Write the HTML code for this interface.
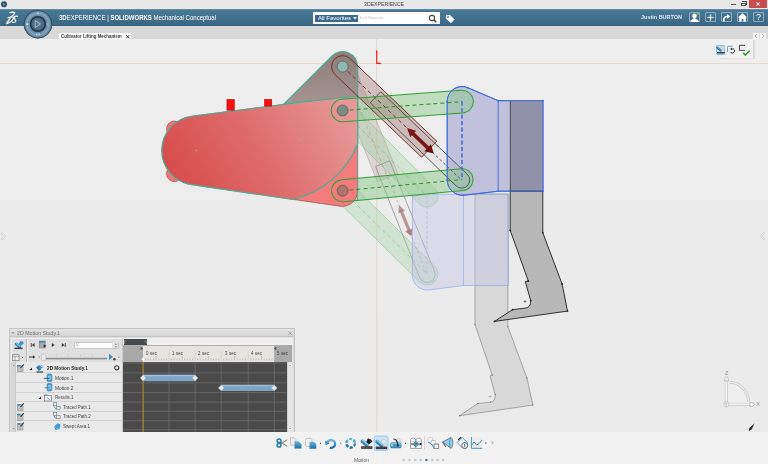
<!DOCTYPE html>
<html><head><meta charset="utf-8">
<style>
*{margin:0;padding:0;box-sizing:border-box}
html,body{width:768px;height:464px;overflow:hidden;background:#ebebeb;font-family:"Liberation Sans",sans-serif}
.a{position:absolute}
.t{position:absolute;white-space:nowrap;line-height:1;transform-origin:0 0;transform:scaleX(0.9999);filter:opacity(1)}
#title{left:0;top:0;width:768px;height:9px;background:#e8e8e8}
#blue{left:0;top:9px;width:768px;height:17px;background:linear-gradient(#7a98ad 0,#477898 1.2px,#43738f 45%,#3a6482 100%)}
#tabbar{left:0;top:26px;width:768px;height:13px;background:#d9d9d9}
#canvas{left:0;top:39px;width:768px;height:393px;background:linear-gradient(#efefef,#ebebeb 60%,#eaeaea)}
#bottom{left:0;top:432px;width:768px;height:32px;background:rgba(243,243,243,0.88)}
svg{position:absolute;left:0;top:0;overflow:visible}
.ib{position:absolute;width:11px;height:10px;border:1px solid rgba(200,220,235,0.55);border-radius:1px}
</style></head><body>

<div id="title" class="a"></div>
<div class="t" style="left:363.5px;top:2px;font-size:5.2px;color:#444">3DEXPERIENCE</div>
<!-- small app icon -->
<svg width="10" height="10" style="left:0;top:0">
<circle cx="4" cy="4.3" r="3" fill="#2a4a66"/><path d="M1.3,3 A3,3 0 0 1 4.5,1.3" fill="none" stroke="#6f9cc4" stroke-width="0.8"/><path d="M4.6,7.3 A3,3 0 0 0 6.9,5" fill="none" stroke="#6f9cc4" stroke-width="0.7"/>
<path d="M3.3,2.9 L5.3,4.3 L3.3,5.7Z" fill="#aac4da"/>
</svg>
<!-- window controls -->
<div class="a" style="left:731px;top:4px;width:4.5px;height:1px;background:#555"></div>
<div class="a" style="left:741px;top:2.5px;width:4.5px;height:3.8px;border:0.8px solid #555;border-top-width:1.2px"></div>
<div class="a" style="left:742.3px;top:1.3px;width:4.4px;height:3.6px;border-top:0.8px solid #555;border-right:0.8px solid #555"></div>
<div class="a" style="left:749px;top:0;width:18px;height:8px;background:#c94c4c"></div>
<svg width="18" height="8" style="left:749px;top:0"><path d="M7.3,2.3 L10.7,5.7 M10.7,2.3 L7.3,5.7" stroke="#fff" stroke-width="1"/></svg>

<div id="blue" class="a"></div>
<!-- 3DS logo -->
<svg width="20" height="28" style="left:0;top:0">
<path d="M10,12.7 C11.5,12.2 13.5,12 14.7,12.7 C14.3,14.5 12.6,16 10.7,17" fill="none" stroke="#fff" stroke-width="1.2" stroke-linecap="round"/>
<path d="M7.8,17.7 C9.6,17.1 12,16.9 13.6,17.3 C13.8,19.6 11,22.4 6.5,23.6" fill="none" stroke="#fff" stroke-width="1.1" stroke-linecap="round"/>
<path d="M10,18.2 C8.9,20 7.6,22.2 6.5,23.6" fill="none" stroke="#fff" stroke-width="1.3" stroke-linecap="round"/>
<path d="M17.6,16.4 C16,15.9 13.8,16.4 14,17.9 C14.2,19.2 16,19.6 15.8,21 C15.6,22.2 13.8,22.6 12.4,22.4" fill="none" stroke="#fff" stroke-width="1.2" stroke-linecap="round"/>
</svg>
<div class="t" style="left:58.5px;top:14.2px;font-size:8px;color:#fff;transform:scaleX(0.752)"><b>3D</b>EXPERIENCE <span style="font-weight:400">|</span> <b>SOLIDWORKS</b> Mechanical Conceptual</div>
<!-- search -->
<div class="a" style="left:313px;top:12px;width:127px;height:12px;background:#fff;border-radius:1px"></div>
<div class="a" style="left:314.6px;top:14.6px;width:43.3px;height:7px;background:#3d6a8c"></div>
<div class="t" style="left:317.5px;top:15px;font-size:6px;color:#fff">All Favorites</div>
<svg width="6" height="4" style="left:352.5px;top:17px"><path d="M0,0 L4,0 L2,2.5Z" fill="#fff"/></svg>
<div class="t" style="left:360.4px;top:16.3px;font-size:4.1px;color:#b8b8b8">In 4 Sources</div>
<svg width="10" height="10" style="left:428px;top:14px">
<circle cx="4" cy="4" r="2.6" fill="none" stroke="#444" stroke-width="1.1"/>
<path d="M5.9,5.9 L8.3,8.3" stroke="#444" stroke-width="1.5"/>
</svg>
<svg width="12" height="10" style="left:445px;top:14px">
<path d="M1,1 L5,1 L9.5,5.5 L5.8,9.2 L1,4.5Z" fill="#fff"/>
<circle cx="3" cy="3" r="0.9" fill="#3f7095"/>
</svg>
<!-- user -->
<div class="t" style="left:641.2px;top:15px;font-size:5.5px;font-weight:700;color:#dfe8ef;transform:scaleX(0.995)">Justin BURTON</div>
<div class="ib" style="left:689px;top:12px;width:11px;height:10px"></div>
<svg width="12" height="12" style="left:689px;top:12px">
<circle cx="5.5" cy="3.9" r="2.3" fill="#fff"/>
<path d="M4.6,5.8 L6.4,5.8 L6.6,7 C8.5,7.4 9.6,8.2 9.6,10 L1.4,10 C1.4,8.2 2.5,7.4 4.4,7Z" fill="#fff"/>
<circle cx="9" cy="1.5" r="1.2" fill="#5fcf3f"/>
</svg>
<div class="ib" style="left:705px;top:12px"></div>
<svg width="12" height="12" style="left:705px;top:12px"><path d="M5.5,2.5 L5.5,8.5 M2.5,5.5 L8.5,5.5" stroke="#fff" stroke-width="1.2"/></svg>
<div class="ib" style="left:721px;top:12px"></div>
<svg width="12" height="12" style="left:721px;top:12px"><path d="M2.8,9.3 C2.3,6 4,4.3 7,4.3" fill="none" stroke="#fff" stroke-width="1.6"/><path d="M6.2,2 L9.3,4.4 L6.2,6.8Z" fill="#fff"/></svg>
<div class="ib" style="left:737px;top:12px"></div>
<svg width="12" height="12" style="left:737px;top:12px"><path d="M5.5,1.3 L10,5.5 L8.8,5.5 L8.8,9.6 L2.2,9.6 L2.2,5.5 L1,5.5Z" fill="#fff"/><rect x="4.6" y="6.8" width="1.8" height="2.8" fill="#4a7a9c"/></svg>
<div class="ib" style="left:753px;top:12px"></div>
<div class="t" style="left:755.8px;top:13px;font-size:9px;color:#fff">?</div>

<div id="tabbar" class="a"></div>
<!-- tab -->
<div class="a" style="left:59px;top:32.7px;width:72px;height:6.5px;background:#fff"></div>
<div class="t" style="left:61px;top:34px;font-size:5px;font-weight:700;color:#333;transform:scaleX(0.885)">Cultivator Lifting Mechanism</div>
<svg width="6" height="6" style="left:125px;top:33.5px"><path d="M1,1 L4.4,4.4 M4.4,1 L1,4.4" stroke="#222" stroke-width="0.9"/></svg>
<!-- tab scroll arrows -->
<div class="a" style="left:753px;top:33px;width:6px;height:6px;background:#f4f4f4"></div>
<div class="a" style="left:760px;top:33px;width:6px;height:6px;background:#f4f4f4"></div>
<svg width="16" height="8" style="left:753px;top:33px"><path d="M3.8,1.3 L2,3 L3.8,4.7" fill="none" stroke="#999" stroke-width="0.7"/><path d="M9.3,1.3 L11.2,3 L9.3,4.7" fill="none" stroke="#999" stroke-width="0.7"/></svg>

<div id="canvas" class="a"></div>
<!-- compass -->
<svg width="40" height="40" style="left:18px;top:4px">
<defs>
<radialGradient id="cg" cx="0.5" cy="0.5" r="0.5"><stop offset="0.5" stop-color="#4a6f88"/><stop offset="0.78" stop-color="#86a8bf"/><stop offset="0.93" stop-color="#5d829c"/><stop offset="1" stop-color="#3a5c74"/></radialGradient>
<radialGradient id="cg2" cx="0.5" cy="0.45" r="0.55"><stop offset="0" stop-color="#5d7f96"/><stop offset="1" stop-color="#3f6077"/></radialGradient>
</defs>
<circle cx="19.95" cy="20.15" r="14" fill="url(#cg)" stroke="#2c4d63" stroke-width="0.9"/>
<circle cx="19.9" cy="20" r="7.3" fill="url(#cg2)" stroke="#1c3344" stroke-width="1.4"/>
<path d="M17.2,16.5 L22.4,20 L17.2,23.6Z" fill="none" stroke="#b9ccd9" stroke-width="0.8"/>
<rect x="19.6" y="8" width="0.8" height="2.4" fill="#e4ecf1"/>
<rect x="8.2" y="19.4" width="2.2" height="1.4" fill="#e4ecf1"/>
<path d="M29.2,19.2 L30,21.6" stroke="#e4ecf1" stroke-width="0.6"/>
<rect x="18.3" y="29.6" width="1" height="1.4" fill="#e4ecf1"/><rect x="20.6" y="29.6" width="1" height="1.4" fill="#e4ecf1"/>
</svg>

<svg width="768" height="464" viewBox="0 0 768 464" style="left:0;top:0">
<defs>
<linearGradient id="redg" x1="0" y1="0.6" x2="1" y2="0.3">
<stop offset="0" stop-color="#d84d4d"/><stop offset="0.45" stop-color="#de6a6a"/><stop offset="1" stop-color="#e79898"/></linearGradient>
<linearGradient id="trig" x1="0" y1="0" x2="0" y2="1">
<stop offset="0" stop-color="#8b7f7a"/><stop offset="1" stop-color="#a5938f"/></linearGradient>
<path id="lnkG1" d="M0,-11.3 L119.7,-11.3 A11.3,11.3 0 0 1 119.7,11.3 L0,11.3 A11.3,11.3 0 0 1 0,-11.3Z"/>
<path id="lnkG2" d="M0,-11 L119.9,-11 A11,11 0 0 1 119.9,11 L0,11 A11,11 0 0 1 0,-11Z"/>
<path id="lnkBr" d="M0,-11 L119.7,-11 L119.7,11 L0,11 A11,11 0 0 1 0,-11Z"/>
<path id="bodyB" d="M192,116.2 L350,96 L357.6,96 L357.6,192 A15.5,15.5 0 0 1 340,206.2 L191.6,184.6 A34.5,34.5 0 0 1 192,116.2Z"/>
<path id="bodyA" d="M192,116.2 L350,96 L357.6,96 L357.6,144 A92,92 0 0 1 293,199.5 L191.6,184.6 A34.5,34.5 0 0 1 192,116.2Z"/>
</defs>
<!-- axis lines -->
<line x1="0" y1="63.5" x2="768" y2="63.5" stroke="#e9d8d0" stroke-width="1"/>
<line x1="376.7" y1="39" x2="376.7" y2="464" stroke="#e5d7d2" stroke-width="1"/>
<path d="M376.7,51.5 L376.7,63.4 L380,63.4" fill="none" stroke="#ee2020" stroke-width="1.2"/><path d="M375.6,52.5 L376.7,49.8 L377.8,52.5Z M379.5,62.2 L381.5,63.4 L379.5,64.6Z" fill="#ee2020"/>
<!-- ghost tine -->
<path d="M475,194 L475,324.6 L492.2,375 L490.1,375.9 L495.2,394.6 Q495.5,401.5 490.7,402.1 L477.7,403.6 L459.6,415.7 L532.9,405.1 L526.9,378 L507.9,326.7 L507.9,194Z" fill="#d8d8d8" stroke="#8a8a8a" stroke-width="0.7"/>
<g fill="#777"><circle cx="475" cy="324.6" r="0.7"/><circle cx="507.9" cy="326.7" r="0.7"/><circle cx="492.2" cy="375" r="0.7"/><circle cx="526.9" cy="378" r="0.7"/><circle cx="495.2" cy="394.6" r="0.7"/><circle cx="490.7" cy="402.1" r="0.7"/><circle cx="477.7" cy="403.6" r="0.7"/><circle cx="459.6" cy="415.7" r="0.7"/><circle cx="532.9" cy="405.1" r="0.7"/></g>
<circle cx="490.5" cy="396" r="0.3" fill="none"/>
<path d="M488.5,396.5 L491.5,396.5 M490,395 L490,398" stroke="#999" stroke-width="0.5"/>
<!-- ghost brown link -->
<g transform="translate(342.6,66.6) rotate(67.9)">
<path d="M0,-11 L119.7,-11 L119.7,11 L0,11 A11,11 0 0 1 0,-11Z" fill="rgba(175,145,145,0.25)" stroke="rgba(150,100,100,0.4)" stroke-width="0.7"/>
<line x1="0" y1="0" x2="119" y2="0" stroke="rgba(140,80,80,0.45)" stroke-width="0.7" stroke-dasharray="4,3"/>
<path d="M105,-8.2 L224.3,-8.2 A8.1,8.1 0 0 1 224.3,8 L105,7.1 Z" fill="none" stroke="rgba(70,70,70,0.55)" stroke-width="0.7"/>
<line x1="119" y1="0" x2="224" y2="0" stroke="rgba(90,90,90,0.45)" stroke-width="0.7" stroke-dasharray="3,2"/>
<line x1="155" y1="0" x2="181" y2="0" stroke="rgba(175,130,130,0.8)" stroke-width="3.2"/>
<polygon points="149.5,0 157,-3.6 157,3.6" fill="rgba(175,130,130,0.8)"/>
<polygon points="183,0 176,-4 176,4" fill="rgba(165,120,120,0.8)"/>
</g>
<!-- ghost green links -->
<g transform="translate(342.6,110.5) rotate(45.4)">
<path d="M0,-11 L120.5,-11 A11,11 0 0 1 120.5,11 L0,11 A11,11 0 0 1 0,-11Z" fill="rgba(150,210,150,0.3)" stroke="rgba(90,175,90,0.45)" stroke-width="0.7"/>
<line x1="0" y1="0" x2="120" y2="0" stroke="rgba(60,150,60,0.45)" stroke-width="0.7" stroke-dasharray="4,3"/>
</g>
<g transform="translate(342.6,190.7) rotate(44.6)">
<path d="M0,-11 L118.5,-11 A11,11 0 0 1 118.5,11 L0,11 A11,11 0 0 1 0,-11Z" fill="rgba(150,210,150,0.3)" stroke="rgba(90,175,90,0.45)" stroke-width="0.7"/>
<line x1="0" y1="0" x2="118" y2="0" stroke="rgba(60,150,60,0.45)" stroke-width="0.7" stroke-dasharray="4,3"/>
</g>
<!-- ghost blue piece -->
<path d="M412.4,196 L412.4,275.7 A14.8,14.8 0 0 0 428.4,290 L463.4,285.5 L508.6,285.5 L508.6,194.2 L430,194.2Z" fill="rgba(195,195,228,0.42)" stroke="#8eacf0" stroke-width="0.7"/>
<line x1="463.4" y1="194.2" x2="463.4" y2="285.5" stroke="#8eacf0" stroke-width="0.7"/>
<line x1="427" y1="196" x2="427" y2="274" stroke="#a8c0f0" stroke-width="0.8" stroke-dasharray="3,2"/>

<!-- blue piece -->
<path d="M447.2,101.6 A14.8,14.8 0 0 1 468,87.8 L498.2,100.7 L543,100.7 L543,191.2 L498.2,191.2 L463.5,195.3 A15.5,15.5 0 0 1 447.2,180 Z" fill="rgba(165,165,208,0.62)" stroke="#3a6ae0" stroke-width="0.9"/>
<rect x="510.3" y="100.7" width="32.7" height="90.5" fill="#9192a9"/>
<line x1="510.3" y1="100.7" x2="510.3" y2="191.2" stroke="#333" stroke-width="0.8"/>
<line x1="498.2" y1="100.7" x2="498.2" y2="191.2" stroke="#3a6ae0" stroke-width="0.9"/>
<path d="M498.2,100.7 L543,100.7 L543,191.2" fill="none" stroke="#3a6ae0" stroke-width="0.9"/>
<line x1="462" y1="101.6" x2="462" y2="179.6" stroke="#3a6ae0" stroke-width="1" stroke-dasharray="4,2.5"/>
<!-- link fills behind body -->
<g transform="translate(342.6,110.5) rotate(-4.26)"><use href="#lnkG1" fill="rgba(135,200,135,0.45)"/></g>
<g transform="translate(342.6,190.7) rotate(-5.31)"><use href="#lnkG2" fill="rgba(135,200,135,0.45)"/></g>
<g transform="translate(342.6,66.6) rotate(43.65)"><use href="#lnkBr" fill="rgba(150,85,85,0.3)"/></g>

<!-- red body -->
<circle cx="174.5" cy="129" r="8" fill="#ef7676" stroke="#9a4444" stroke-width="0.6"/>
<circle cx="174.5" cy="173.7" r="8" fill="#ef7676" stroke="#9a4444" stroke-width="0.6"/>
<use href="#bodyB" fill="#f27c7c" stroke="#9a4848" stroke-width="0.7"/>
<use href="#bodyA" fill="url(#redg)" stroke="#48ae9a" stroke-width="1.15"/>
<circle cx="196.4" cy="150.4" r="0.9" fill="#9aa"/>
<circle cx="301" cy="140" r="0.9" fill="#9aa"/>
<rect x="226.9" y="99.3" width="7.5" height="11" fill="#f41010" stroke="#a01010" stroke-width="0.5"/>
<rect x="264.4" y="99.3" width="7.4" height="6.8" fill="#f41010" stroke="#a01010" stroke-width="0.5"/>
<!-- grey triangle -->
<path d="M284.3,103.6 L332,56 A15,15 0 0 1 357.6,66.6 L357.6,96.3 Z" fill="url(#trig)" stroke="#48ae9a" stroke-width="1.1"/>
<path d="M357.6,66.6 L357.6,200" stroke="#5aa898" stroke-width="0.9"/>

<!-- brown link stroke + cylinder -->
<g transform="translate(342.6,66.6) rotate(43.65)">
<use href="#lnkBr" fill="none" stroke="#7a2a2a" stroke-width="0.9"/>
<line x1="0" y1="0" x2="119" y2="0" stroke="#7a2a2a" stroke-width="0.9" stroke-dasharray="4,3"/>
<path d="M45,-8.2 L164.4,-8.2 A8.1,8.1 0 0 1 164.4,8 L45,7.1 Z" fill="rgba(80,80,80,0.04)" stroke="#444" stroke-width="0.8"/>
<line x1="119" y1="0" x2="164" y2="0" stroke="#555" stroke-width="0.8" stroke-dasharray="3,2"/>
<line x1="95" y1="0" x2="121" y2="0" stroke="#7a1515" stroke-width="3.6"/>
<polygon points="89,0 97.5,-4.2 97.5,4.2" fill="#7a1515"/>
<polygon points="126,0 117.5,-4.8 117.5,4.8" fill="#6a1010"/>
</g>
<!-- green link strokes -->
<g transform="translate(342.6,110.5) rotate(-4.26)">
<use href="#lnkG1" fill="none" stroke="#35a035" stroke-width="1"/>
<line x1="0" y1="0" x2="119.7" y2="0" stroke="#2f8f2f" stroke-width="1" stroke-dasharray="4,3"/>
</g>
<g transform="translate(342.6,190.7) rotate(-5.31)">
<use href="#lnkG2" fill="none" stroke="#35a035" stroke-width="1"/>
<line x1="0" y1="0" x2="119.9" y2="0" stroke="#2f8f2f" stroke-width="1" stroke-dasharray="4,3"/>
</g>
<!-- blue strokes on top -->
<path d="M447.2,101.6 A14.8,14.8 0 0 1 468,87.8 L498.2,100.7 M498.2,191.2 L463.5,195.3 A15.5,15.5 0 0 1 447.2,180 L447.2,101.6" fill="none" stroke="#3a6ae0" stroke-width="0.9"/>
<line x1="462" y1="101.6" x2="462" y2="180" stroke="#3a6ae0" stroke-width="1" stroke-dasharray="4,2.5"/>
<circle cx="447.2" cy="101.6" r="0.9" fill="#3a6ae0"/><circle cx="447.2" cy="180" r="0.9" fill="#3a6ae0"/><circle cx="463.5" cy="195.3" r="0.9" fill="#3a6ae0"/>
<!-- dark tine -->
<path d="M510.2,191.2 L510.2,230.3 L528.3,281 L525.3,281.6 L530.7,300.6 Q531,307.5 525.3,308.1 L512.6,309.6 L494.5,321.4 L567.5,311.1 L562.1,284 L542.8,232.7 L542.8,191.2Z" fill="#b8b8b8" stroke="#1e1e1e" stroke-width="0.9"/>
<path d="M523.5,301.5 L526.5,301.5 M525,300 L525,303" stroke="#333" stroke-width="0.5"/>
<line x1="498.2" y1="191.2" x2="543" y2="191.2" stroke="#3a6ae0" stroke-width="0.9"/>
<g fill="#222"><circle cx="510.2" cy="230.3" r="0.9"/><circle cx="542.8" cy="232.7" r="0.9"/><circle cx="528.3" cy="281" r="0.9"/><circle cx="562.1" cy="284" r="0.9"/><circle cx="530.7" cy="300.6" r="0.9"/><circle cx="512.6" cy="309.6" r="0.9"/><circle cx="494.5" cy="321.4" r="0.9"/><circle cx="567.5" cy="311.1" r="0.9"/></g>
<g fill="#3a6ae0"><circle cx="498.2" cy="100.7" r="0.9"/><circle cx="543" cy="100.7" r="0.9"/><circle cx="498.2" cy="191.2" r="0.9"/><circle cx="543" cy="191.2" r="0.9"/><circle cx="468" cy="87.8" r="0.9"/></g>
<!-- pivots -->
<circle cx="342.6" cy="66.6" r="5.5" fill="#8fb8b2" stroke="#555" stroke-width="0.7"/>
<circle cx="342.6" cy="110.5" r="5.5" fill="#7d8c80" stroke="#555" stroke-width="0.7"/>
<circle cx="342.6" cy="190.7" r="5.5" fill="#b07468" stroke="#555" stroke-width="0.7"/>
</svg>

<!-- Motion study panel -->
<div class="a" style="left:9px;top:328px;width:285.5px;height:103.5px;background:#dedede;border:1px solid #c4c4c4;border-bottom:none"></div>
<div class="a" style="left:10px;top:329px;width:283.5px;height:8px;background:linear-gradient(#e3e3e3,#d5d5d5);border-bottom:1px solid #c6c6c6"></div>
<svg width="6" height="4" style="left:11.2px;top:331.5px"><path d="M0.3,0.3 L3.3,0.3 L1.8,2Z" fill="#888"/></svg>
<div class="t" style="left:16.7px;top:330.3px;font-size:6px;color:#707070;transform:scaleX(0.88)">2D Motion Study.1</div>
<svg width="8" height="8" style="left:287px;top:329.5px"><path d="M1.5,1.5 L5,5 M5,1.5 L1.5,5" stroke="#999" stroke-width="0.8"/></svg>
<!-- toolbar -->
<div class="a" style="left:10.5px;top:338px;width:111px;height:24px;background:#e0e0e0;border-top:1px solid #f2f2f2;border-left:1px solid #f2f2f2"></div>
<div class="a" style="left:26.3px;top:338.5px;width:1px;height:23px;background:#b8b8b8"></div>
<div class="a" style="left:27.3px;top:338.5px;width:1px;height:23px;background:#f0f0f0"></div>
<!-- blue motion icon -->
<svg width="12" height="12" style="left:12.5px;top:339.5px">
<path d="M5.5,4.5 L7.5,1.2 C9,0.9 10.6,2 10.4,3.6 L7,6.3Z" fill="#3f9bd0" stroke="#2a78a8" stroke-width="0.4"/>
<g transform="rotate(42 5 5.5)"><rect x="1.2" y="4.2" width="7.5" height="2.8" rx="1.3" fill="#2f86b8"/><rect x="2" y="4.5" width="5.5" height="0.9" fill="#8fd0ee"/></g>
<rect x="1.6" y="7.6" width="8" height="1.5" fill="#3a3a3a"/>
</svg>
<svg width="10" height="9" style="left:11.5px;top:353.5px">
<rect x="0.5" y="0.7" width="6.5" height="6" fill="#f3f3f3" stroke="#777" stroke-width="0.7"/>
<path d="M0.5,2.3 L7,2.3 M3,2.3 L3,6.7" stroke="#777" stroke-width="0.6"/>
</svg>
<div class="a" style="left:22px;top:356.5px;width:1px;height:1px;background:#666"></div>
<!-- transport -->
<svg width="95" height="12" style="left:28px;top:339px">
<rect x="2.8" y="4" width="0.9" height="4" fill="#444"/><path d="M6.6,4 L3.8,6 L6.6,8Z" fill="#444"/>
<rect x="11.2" y="2" width="6" height="7" fill="#aaa" stroke="#777" stroke-width="0.5"/><rect x="11.2" y="2" width="6" height="1.6" fill="#3c8fbf"/><path d="M15.6,5.3 L18.6,7 L15.6,8.8Z" fill="#333"/>
<path d="M23.8,4 L26.5,6 L23.8,8Z" fill="#333"/>
<path d="M33.8,4 L36.5,6 L33.8,8Z" fill="#333"/><rect x="36.8" y="4" width="0.9" height="4" fill="#444"/>
</svg>
<div class="a" style="left:73.5px;top:341.5px;width:45px;height:7px;background:#fff;border:1px solid #c8c8c8;border-radius:1px"></div>
<div class="a" style="left:112px;top:342px;width:6px;height:6px;background:#e2e2e2"></div>
<svg width="6" height="7" style="left:112.5px;top:341.5px"><path d="M1.8,2.6 L2.8,1.6 L3.8,2.6Z M1.8,4.6 L2.8,5.6 L3.8,4.6Z" fill="#555"/></svg>
<div class="t" style="left:75.8px;top:342.8px;font-size:4.5px;color:#9aa">0</div>
<!-- slider row -->
<svg width="100" height="10" style="left:28px;top:352px">
<path d="M1,5 L6,5" stroke="#333" stroke-width="1"/><path d="M5,3.3 L7.2,5 L5,6.7Z" fill="#333"/>
<rect x="10.5" y="4.6" width="1.5" height="0.8" fill="#888"/>
<rect x="16" y="5.8" width="63" height="1.6" fill="#8e8e8e"/>
<rect x="13.4" y="2.1" width="4.5" height="6.3" rx="1" fill="#ececec" stroke="#aaa" stroke-width="0.5"/>
<path d="M28.3,3 L28.3,4 M40.3,3 L40.3,4 M52.5,3 L52.5,4 M64.5,3 L64.5,4 M76.5,3 L76.5,4" stroke="#999" stroke-width="0.5"/>
<path d="M81,1.8 L85,5 L81,8.1Z" fill="#3c8fbf"/>
<circle cx="86.4" cy="7.3" r="1.3" fill="#444"/>
<rect x="90.3" y="4.7" width="1.2" height="0.8" fill="#666"/>
</svg>
<!-- tree -->
<div class="a" style="left:10.5px;top:362px;width:5.3px;height:69.5px;background:#d6d6d6;border-right:1px solid #c8c8c8"></div>
<svg width="6" height="6" style="left:10.5px;top:363px"><path d="M1.6,3 L2.7,2 L3.8,3Z" fill="#777"/></svg>
<svg width="6" height="6" style="left:10.5px;top:425px"><path d="M1.6,3 L2.7,4 L3.8,3Z" fill="#777"/></svg>
<div class="a" style="left:15.8px;top:362px;width:106.4px;height:69.5px;background:#e9e9e9"></div>
<div class="a" style="left:15.8px;top:372px;width:106.4px;height:1px;background:#d2d2d2"></div>
<div class="a" style="left:15.8px;top:382px;width:106.4px;height:1px;background:#d2d2d2"></div>
<div class="a" style="left:15.8px;top:391.5px;width:106.4px;height:1px;background:#d2d2d2"></div>
<div class="a" style="left:15.8px;top:401px;width:106.4px;height:1px;background:#d2d2d2"></div>
<div class="a" style="left:15.8px;top:410.8px;width:106.4px;height:1px;background:#d2d2d2"></div>
<div class="a" style="left:15.8px;top:420.3px;width:106.4px;height:1px;background:#d2d2d2"></div>
<div class="a" style="left:122px;top:338px;width:1.3px;height:93.5px;background:#c9c9c9"></div>
<!-- check icons -->
<svg width="10" height="70" style="left:16px;top:362px">
<g id="chk"><rect x="1.4" y="3.3" width="5.6" height="6.4" fill="#bdbdbd" stroke="#888" stroke-width="0.5"/><rect x="1.4" y="3" width="3" height="1.6" fill="#3c8fbf"/><path d="M4.5,6 L7.8,2.4" stroke="#333" stroke-width="1.1"/></g>
<use href="#chk" y="39"/><use href="#chk" y="48.8"/><use href="#chk" y="58.3"/>
</svg>
<svg width="4" height="4" style="left:29.2px;top:366.8px"><path d="M0.5,3 L3,3 L3,0.5Z" fill="#222"/></svg>
<svg width="4" height="4" style="left:38.2px;top:395.5px"><path d="M0.5,3 L3,3 L3,0.5Z" fill="#222"/></svg>
<svg width="10" height="10" style="left:35px;top:363.5px">
<path d="M1.5,3 L4,1 L7.5,3.5 L5,5.5Z" fill="#3c8fbf"/><path d="M1,3.5 L3.8,7 L6,5.5 L3.5,2Z" fill="#2f7fb0"/>
<path d="M4.5,1.5 C6.5,0.5 8.5,2 7.8,4" fill="none" stroke="#888" stroke-width="0.6"/>
<rect x="1.5" y="7.3" width="6.5" height="1.4" fill="#555"/>
</svg>
<div class="t" style="left:46.5px;top:365.8px;font-size:5px;font-weight:700;color:#2a2a2a;transform:scaleX(0.945)">2D Motion Study.1</div>
<svg width="6" height="6" style="left:113.5px;top:364.5px"><circle cx="2.8" cy="2.8" r="2.1" fill="none" stroke="#444" stroke-width="1.1"/></svg>
<!-- motion icons -->
<svg width="10" height="30" style="left:43px;top:372px">
<rect x="4" y="2" width="5" height="7.5" rx="1.3" fill="#3f9bd0" stroke="#2f78a8" stroke-width="0.5"/><rect x="4.8" y="3.5" width="3.4" height="4.5" fill="#7cc4ea"/><path d="M0.8,6.3 L6.5,6.3" stroke="#333" stroke-width="0.8"/>
<rect x="4" y="11.5" width="5" height="7.5" rx="1.3" fill="#3f9bd0" stroke="#2f78a8" stroke-width="0.5"/><rect x="4.8" y="13" width="3.4" height="4.5" fill="#7cc4ea"/><path d="M1.5,15.8 L6.5,15.8" stroke="#666" stroke-width="0.8"/>
</svg>
<div class="t" style="left:54.8px;top:376px;font-size:5px;color:#454545;transform:scaleX(0.96)">Motion.1</div>
<div class="t" style="left:54.8px;top:385.7px;font-size:5px;color:#454545;transform:scaleX(0.96)">Motion.2</div>
<svg width="9" height="8" style="left:44px;top:393.5px"><rect x="0.5" y="1.3" width="7" height="5.7" fill="#f0f0f0" stroke="#666" stroke-width="0.6"/><rect x="0.5" y="0.5" width="3" height="1" fill="#888"/><path d="M3,3.5 L6,6" stroke="#3c8fbf" stroke-width="0.8"/></svg>
<div class="t" style="left:54.8px;top:395px;font-size:5px;color:#454545;transform:scaleX(0.89)">Results.1</div>
<svg width="9" height="30" style="left:52.5px;top:402px">
<g id="tp"><rect x="0.5" y="0.8" width="3.3" height="3" fill="#f3f3f3" stroke="#555" stroke-width="0.5"/><rect x="3.8" y="4.2" width="3.3" height="3" fill="#f3f3f3" stroke="#555" stroke-width="0.5"/><path d="M1.3,4.5 C2,6.5 3,7 3.8,7" fill="none" stroke="#2f86b8" stroke-width="0.9"/></g>
<use href="#tp" y="9.6"/>
</svg>
<svg width="9" height="9" style="left:52.5px;top:421.5px"><path d="M1,5 L4.5,1.3 L7.5,2.5 L6.5,7 L2.5,8Z" fill="#3f9bd0"/><path d="M1,5 L6.5,7" stroke="#7cc4ea" stroke-width="0.6"/></svg>
<div class="t" style="left:63.3px;top:404.8px;font-size:5px;color:#454545;transform:scaleX(0.885)">Traced Path.1</div>
<div class="t" style="left:63.3px;top:414.3px;font-size:5px;color:#454545;transform:scaleX(0.885)">Traced Path.2</div>
<div class="t" style="left:63.3px;top:424px;font-size:5px;color:#454545;transform:scaleX(0.91)">Swept Area.1</div>

<!-- timeline -->
<div class="a" style="left:123.3px;top:338px;width:170px;height:7.3px;background:#efefef"></div>
<div class="a" style="left:123.7px;top:338.9px;width:23px;height:5.9px;background:#454b4f"></div>
<svg width="24" height="7" style="left:123.7px;top:338.9px"><path d="M0.8,1.2 L0.8,4.8 M22.2,1.2 L22.2,4.8" stroke="#ccc" stroke-width="0.5"/><path d="M1.6,3 L2.4,2.2 M21.4,3 L20.6,2.2" stroke="#ccc" stroke-width="0.4"/></svg>
<div class="a" style="left:123.3px;top:345px;width:169px;height:1px;background:#b0b0b0"></div>
<div class="a" style="left:123.3px;top:346px;width:20.1px;height:15.5px;background:#a9a9a9"></div>
<div class="a" style="left:143.4px;top:346px;width:130.8px;height:15.5px;background:#e6e4e1"></div>
<div class="a" style="left:274.2px;top:346px;width:18px;height:15.5px;background:#a9a9a9"></div>
<svg width="170" height="18" style="left:123.3px;top:345px">
<path d="M17.7,2.1 L20.1,3.6 L17.7,5.1Z" fill="#444"/>
<path d="M153.3,2.1 L150.9,3.6 L153.3,5.1Z" fill="#444"/>
<path d="M46,6 L46,16 M72.1,6 L72.1,16 M98.2,6 L98.2,16 M125.2,6 L125.2,16 M151.3,6 L151.3,16" stroke="#c8c8c8" stroke-width="0.6"/>
<g stroke="#9a9a9a" stroke-width="0.5">
<path d="M22.7,13.5 L22.7,15.5 M25.3,13.5 L25.3,15.5 M27.9,13.5 L27.9,15.5 M30.5,13.5 L30.5,15.5 M35.8,13.5 L35.8,15.5 M38.4,13.5 L38.4,15.5 M41,13.5 L41,15.5 M43.6,13.5 L43.6,15.5"/>
<path d="M33.1,11 L33.1,15.5 M59.2,11 L59.2,15.5 M85.3,11 L85.3,15.5 M111.5,11 L111.5,15.5 M138.5,11 L138.5,15.5"/>
<path d="M48.8,13.5 L48.8,15.5 M51.4,13.5 L51.4,15.5 M54,13.5 L54,15.5 M56.6,13.5 L56.6,15.5 M61.8,13.5 L61.8,15.5 M64.4,13.5 L64.4,15.5 M67,13.5 L67,15.5 M69.6,13.5 L69.6,15.5"/>
<path d="M74.7,13.5 L74.7,15.5 M77.3,13.5 L77.3,15.5 M80,13.5 L80,15.5 M82.6,13.5 L82.6,15.5 M87.9,13.5 L87.9,15.5 M90.5,13.5 L90.5,15.5 M93.1,13.5 L93.1,15.5 M95.7,13.5 L95.7,15.5"/>
<path d="M100.8,13.5 L100.8,15.5 M103.5,13.5 L103.5,15.5 M106.2,13.5 L106.2,15.5 M108.8,13.5 L108.8,15.5 M114.2,13.5 L114.2,15.5 M116.9,13.5 L116.9,15.5 M119.6,13.5 L119.6,15.5 M122.3,13.5 L122.3,15.5"/>
<path d="M127.8,13.5 L127.8,15.5 M130.4,13.5 L130.4,15.5 M133.1,13.5 L133.1,15.5 M135.8,13.5 L135.8,15.5 M141.2,13.5 L141.2,15.5 M143.9,13.5 L143.9,15.5 M146.5,13.5 L146.5,15.5 M149.1,13.5 L149.1,15.5"/>
</g>
<path d="M20.1,12.3 L21.8,14.2 L20.1,16 L18.4,14.2Z" fill="#fff"/>
</svg>
<div class="t" style="left:146px;top:350.5px;font-size:5.4px;color:#404040;transform:scaleX(0.8);word-spacing:0.6px">0 sec</div>
<div class="t" style="left:172.2px;top:350.5px;font-size:5.4px;color:#404040;transform:scaleX(0.8);word-spacing:0.6px">1 sec</div>
<div class="t" style="left:198.3px;top:350.5px;font-size:5.4px;color:#404040;transform:scaleX(0.8);word-spacing:0.6px">2 sec</div>
<div class="t" style="left:224.5px;top:350.5px;font-size:5.4px;color:#404040;transform:scaleX(0.8);word-spacing:0.6px">3 sec</div>
<div class="t" style="left:250.8px;top:350.5px;font-size:5.4px;color:#404040;transform:scaleX(0.8);word-spacing:0.6px">4 sec</div>
<div class="t" style="left:277px;top:350.5px;font-size:5.4px;color:#3a3a3a;transform:scaleX(0.8);word-spacing:0.6px">5 sec</div>
<!-- grid -->
<div class="a" style="left:123.3px;top:361.5px;width:163.4px;height:70px;background:#4a4a4a"></div>
<svg width="170" height="72" style="left:123.3px;top:361.5px">
<g stroke="#6c6c6c" stroke-width="0.8">
<path d="M0,1 L163.4,1 M0,10.9 L163.4,10.9 M0,20.9 L163.4,20.9 M0,30.6 L163.4,30.6 M0,40.1 L163.4,40.1 M0,49.3 L163.4,49.3 M0,58.8 L163.4,58.8 M0,67.8 L163.4,67.8"/>
<path d="M46,0 L46,70 M72.1,0 L72.1,70 M98.2,0 L98.2,70 M125.2,0 L125.2,70 M151.3,0 L151.3,70"/>
</g>
<path d="M20.1,0 L20.1,70" stroke="#c89a2a" stroke-width="0.9"/>
<rect x="20.1" y="12.8" width="52" height="6.4" fill="#7ea4c4"/><rect x="20.1" y="12.8" width="52" height="1.5" fill="#9dbdd8"/>
<rect x="98.2" y="22.8" width="53.1" height="6.2" fill="#7ea4c4"/><rect x="98.2" y="22.8" width="53.1" height="1.5" fill="#9dbdd8"/>
<path d="M20.1,13 L23,16 L20.1,19 L17.2,16Z M72.1,13 L75,16 L72.1,19 L69.2,16Z M98.2,23 L101.1,25.9 L98.2,28.8 L95.3,25.9Z M151.3,23 L154.2,25.9 L151.3,28.8 L148.4,25.9Z" fill="#e8e8e8" stroke="#aaa" stroke-width="0.4"/>
</svg>
<!-- scrollbar -->
<div class="a" style="left:286.7px;top:361.5px;width:6px;height:70px;background:#e6e6e6;border-left:1px solid #cfcfcf"></div>
<svg width="6" height="70" style="left:287px;top:361.5px"><rect x="1" y="1.5" width="4" height="3.5" fill="#f5f5f5" stroke="#ccc" stroke-width="0.4"/><path d="M2,3.8 L3,2.8 L4,3.8Z" fill="#777"/><rect x="1" y="65" width="4" height="3.5" fill="#f5f5f5" stroke="#ccc" stroke-width="0.4"/><path d="M2,66.2 L3,67.2 L4,66.2Z" fill="#777"/></svg>
<div class="a" style="left:292.7px;top:338px;width:1.6px;height:93.5px;background:#dcdcdc"></div>

<div id="bottom" class="a"></div>
<!-- triad -->
<svg width="50" height="50" style="left:715px;top:365px">
<path d="M11.3,14 L11.3,39.3 L37,39.3 A25,25 0 0 0 11.3,14Z" fill="#f0f0f0" opacity="0.6"/>
<path d="M14.5,17.3 C24.5,17.3 33.5,26 33.5,36.5" fill="none" stroke="#c9c9c9" stroke-width="3"/>
<path d="M14.5,17.3 C24.5,17.3 33.5,26 33.5,36.5" fill="none" stroke="#ececec" stroke-width="1.4"/>
<rect x="9.8" y="14" width="3.2" height="25.5" fill="#cfcfcf"/>
<rect x="10.5" y="14" width="1.6" height="25.5" fill="#f2f2f2"/>
<path d="M11.4,11.3 C12.8,12 13.5,14 13.5,15.8 L9.3,15.8 C9.3,14 10,12 11.4,11.3Z" fill="#f7f7f7" stroke="#9a9a9a" stroke-width="0.6"/>
<rect x="13" y="37.8" width="23" height="3.2" fill="#cfcfcf"/>
<rect x="13" y="38.5" width="23" height="1.6" fill="#f2f2f2"/>
<path d="M39.5,39.4 C38.8,40.8 36.8,41.5 35,41.5 L35,37.3 C36.8,37.3 38.8,38 39.5,39.4Z" fill="#f7f7f7" stroke="#9a9a9a" stroke-width="0.6"/>
<circle cx="11.4" cy="39.4" r="2.6" fill="#f0f0f0" stroke="#b0b0b0" stroke-width="0.6"/>
<text x="9.9" y="9.5" font-size="5.2" fill="#8a8a8a" font-family="Liberation Sans">Z</text>
<text x="41.5" y="41.3" font-size="5.2" fill="#8a8a8a" font-family="Liberation Sans">X</text>
<text x="10.1" y="41" font-size="3.4" fill="#8a8a8a" font-family="Liberation Sans">Y</text>
</svg>
<svg width="10" height="10" style="left:746px;top:422px"><path d="M8.3,1.5 L3.3,6 L2.8,9 L5.6,7.6Z" fill="#2a2a2a"/><path d="M8.3,1.5 L5.6,7.6" stroke="#666" stroke-width="0.4"/></svg>
<!-- left/right chevrons -->
<svg width="8" height="12" style="left:0;top:230px"><path d="M1.2,3.3 L2.4,2.4 L5.6,6.2 L2.4,10 L1.2,9.1 L3.7,6.2Z" fill="#f4f4f4" stroke="#c2c2c2" stroke-width="0.7" stroke-linejoin="round"/></svg>
<svg width="8" height="12" style="left:759px;top:230px"><path d="M5.8,3.3 L4.6,2.4 L1.4,6.2 L4.6,10 L5.8,9.1 L3.3,6.2Z" fill="#f4f4f4" stroke="#c2c2c2" stroke-width="0.7" stroke-linejoin="round"/></svg>
<!-- top right mini toolbar -->
<div class="a" style="left:719px;top:40px;width:34.5px;height:17.5px;background:linear-gradient(90deg,rgba(242,242,242,0),#f2f2f2 30%);border-right:1px solid #d6d6d6;box-shadow:1px 1px 1px #e2e2e2"></div>
<div class="a" style="left:715.6px;top:44.9px;width:9.5px;height:9.9px;background:#c9e1fa;border:0.8px solid #8cc0f0;border-radius:1px"></div>
<svg width="50" height="16" style="left:712px;top:40px">
<path d="M8,8.8 L10,6 C11.5,5.6 12.8,6.5 12.8,8 L9.3,10.8Z" fill="#dcdcdc" stroke="#b0b0b0" stroke-width="0.4"/>
<g transform="rotate(42 7 9)"><rect x="4" y="7.9" width="6.2" height="2.3" rx="1.1" fill="#2a6e98"/><rect x="4.7" y="8.2" width="4.5" height="0.7" fill="#6fb4dc"/></g>
<rect x="5" y="12" width="7.6" height="1.5" fill="#3a3a3a"/>
<path d="M15.5,12 L15.5,7.2 Q15.5,6.2 16.5,6.2 L20.5,6.2" fill="none" stroke="#4f95c4" stroke-width="0.9"/>
<path d="M17.6,12.6 L20.3,12.6" stroke="#4f95c4" stroke-width="0.7"/>
<path d="M19.2,9 L21.6,9 C22.8,9.4 22.9,11.8 21.6,12.7 C20.8,13.3 19.6,13.2 19,12.6" fill="none" stroke="#222" stroke-width="0.9"/>
<path d="M18.2,8.9 L19.8,7.6 L19.8,10.2Z" fill="#222"/>
<path d="M33,5.3 L27.4,5.3 L27.4,10.4 L33,10.4" fill="none" stroke="#333" stroke-width="0.9"/>
<path d="M31.1,12.8 L33.3,15.1 L37.6,10.5" fill="none" stroke="#2c9a2c" stroke-width="1.5"/>
</svg>
<!-- bottom icons -->
<svg width="240" height="20" style="left:270px;top:434px">
<defs>
<linearGradient id="bl" x1="0" y1="0" x2="0" y2="1"><stop offset="0" stop-color="#6fb6dd"/><stop offset="1" stop-color="#1f6f9f"/></linearGradient>
</defs>
<!-- scissors -->
<g transform="translate(6.7,4.5)"><path d="M3.3,3.2 L10.5,7.8 M3.3,5.8 L10.5,1.2" stroke="#666" stroke-width="0.9"/><ellipse cx="2.3" cy="2.3" rx="2" ry="1.8" fill="none" stroke="#2a7fae" stroke-width="1.5"/><ellipse cx="2.3" cy="6.7" rx="2" ry="1.8" fill="none" stroke="#2a7fae" stroke-width="1.5"/></g>
<!-- copy -->
<g transform="translate(20,3.2)"><path d="M0.5,0.5 L4,0.5 L6,2.5 L6,8 L0.5,8Z" fill="#f0f0f0" stroke="#aaa" stroke-width="0.6"/><path d="M4.5,4 L8.5,4 L11.5,7 L11.5,11.2 L4.5,11.2Z" fill="url(#bl)"/></g>
<!-- paste -->
<g transform="translate(35,3.2)"><rect x="0.5" y="1.2" width="6.5" height="8" rx="1.2" fill="#f0f0f0" stroke="#aaa" stroke-width="0.6"/><path d="M4.5,4.5 L9,4.5 L11.3,6.8 L11.3,11.5 L4.5,11.5Z" fill="url(#bl)"/></g>
<rect x="50" y="8.7" width="1" height="1" fill="#333"/>
<!-- undo -->
<g transform="translate(55,4.5)"><path d="M2,4.3 C3,1 9,0.5 10,4.5 C10.8,8 7.5,9.8 4.8,9.3" fill="none" stroke="url(#bl)" stroke-width="2.2"/><path d="M0,2.2 L4.5,4.8 L0.5,7Z" fill="#3c8fbf"/></g>
<rect x="70.2" y="8.7" width="1" height="1" fill="#333"/>
<!-- gear ring -->
<g transform="translate(75.2,3.7)"><circle cx="5.5" cy="5.5" r="4.3" fill="none" stroke="url(#bl)" stroke-width="2.4" stroke-dasharray="3.2,1.3"/></g>
<!-- motion icon 1 -->
<g transform="translate(90.8,3)">
<path d="M4.5,6.5 L7,1.8 C8.8,1.6 11.2,2.8 11.5,4.8 L6,9Z" fill="#1e1e1e"/>
<path d="M6.5,2.5 L8.5,1 M8,3 L10.5,2 M9,4.5 L11.5,4" stroke="#555" stroke-width="0.5"/>
<g transform="rotate(40 4 6)"><rect x="-0.8" y="4.2" width="9.5" height="3.8" rx="1.8" fill="url(#bl)"/><rect x="0" y="4.7" width="7.5" height="1.1" rx="0.5" fill="#8fd0ee"/></g>
<rect x="0.3" y="9.3" width="11.3" height="2.5" fill="#2e2e2e"/><path d="M1,10.55 L11,10.55" stroke="#888" stroke-width="0.7" stroke-dasharray="0.8,0.6"/>
</g>
<!-- selected -->
<rect x="104.2" y="2" width="13.9" height="14.5" rx="1.5" fill="#cde3f8" stroke="#8fc2f0" stroke-width="0.8"/>
<g transform="translate(105.5,3.3)">
<path d="M4.5,6.5 L7,1.8 C8.8,1.6 11.2,2.8 11.5,4.8 L6,9Z" fill="#e6e6e6" stroke="#b5b5b5" stroke-width="0.5"/>
<g transform="rotate(40 4 6)"><rect x="-0.8" y="4.2" width="9.5" height="3.8" rx="1.8" fill="url(#bl)"/><rect x="0" y="4.7" width="7.5" height="1.1" rx="0.5" fill="#8fd0ee"/></g>
<rect x="0.3" y="9.3" width="11.3" height="2.5" fill="#2e2e2e"/><path d="M1,10.55 L11,10.55" stroke="#888" stroke-width="0.7" stroke-dasharray="0.8,0.6"/>
</g>
<!-- icon 4 -->
<g transform="translate(119.8,3.5)">
<path d="M4,5 C4,1.5 7,0.3 9,0.5 C11,0.8 12,3 12,5.5Z" fill="#dcdcdc"/>
<rect x="0.3" y="4.6" width="11.5" height="6.2" rx="2.6" fill="url(#bl)"/>
<rect x="1.5" y="6" width="9" height="3.4" rx="1.5" fill="none" stroke="#9fd6f0" stroke-width="0.5"/>
<path d="M3.5,1.5 C6,1.5 7.8,3.5 8,8" fill="none" stroke="#1e1e1e" stroke-width="1.1"/>
<circle cx="8" cy="8.2" r="0.9" fill="#1e1e1e"/>
<circle cx="2.3" cy="7.8" r="0.8" fill="#e8e8e8"/>
</g>
<rect x="135" y="8.7" width="1" height="1" fill="#333"/>
<!-- icon 5 grid star -->
<g transform="translate(140,3)">
<path d="M0.5,11.5 L0.5,3 C0.5,0.5 5.6,0.5 5.6,3 L5.6,11.5Z" fill="#f6f6f6" stroke="#777" stroke-width="0.6"/>
<path d="M6.1,11.5 L6.1,3 C6.1,0.5 11.4,0.5 11.4,3 L11.4,11.5Z" fill="#f6f6f6" stroke="#777" stroke-width="0.6"/>
<path d="M0.5,4.5 L11.4,4.5 M0.5,8 L11.4,8" stroke="#aaa" stroke-width="0.5"/>
<path d="M0.8,7 L10.8,7" stroke="#1e1e1e" stroke-width="0.9"/><circle cx="10.8" cy="7" r="0.9" fill="#1e1e1e"/>
<path d="M5.8,4 L5.8,10 M3.2,7 L8.4,7 M3.9,5 L7.7,9 M7.7,5 L3.9,9" stroke="#2f86b8" stroke-width="1"/>
</g>
<rect x="154" y="2" width="0.8" height="14" fill="#cfcfcf"/>
<!-- traced path -->
<g transform="translate(157.3,3)"><rect x="0.8" y="0.6" width="4.5" height="4.3" rx="1" fill="#f6f6f6" stroke="#bbb" stroke-width="0.6"/><rect x="3.8" y="3.4" width="4.5" height="4.3" rx="1" fill="#f6f6f6" stroke="#999" stroke-width="0.6"/><rect x="6.8" y="7" width="4.6" height="4.6" fill="#f6f6f6" stroke="#666" stroke-width="0.7"/><path d="M0.5,5.5 C3,5.5 6,8.5 6.7,11.8" fill="none" stroke="#2f86b8" stroke-width="1"/></g>
<!-- swept cone -->
<g transform="translate(172,3)"><path d="M0.5,5 L9,0.5 C11.5,2.5 11.5,9 9,11.3 Z" fill="#8fd0ee" stroke="#555" stroke-width="0.7"/><path d="M9,0.5 C7,3 7,9 9,11.3" fill="none" stroke="#3c8fbf" stroke-width="0.8"/><path d="M0.5,5 L4,10" stroke="#666" stroke-width="1.2"/></g>
<!-- icon 8 -->
<g transform="translate(186.7,3)"><path d="M0.5,5.5 L5.5,0.5 L11,6 L6,11Z" fill="#fff" stroke="#2f86b8" stroke-width="0.9"/><path d="M1.5,3 L4.5,0.2" stroke="#222" stroke-width="1.1"/><circle cx="8" cy="8.5" r="3" fill="#f0f0f0" stroke="#444" stroke-width="0.8"/><path d="M8,7 L8,10" stroke="#2f86b8" stroke-width="1"/></g>
<!-- chart -->
<g transform="translate(200.6,3)"><path d="M0.8,0 L0.8,11.3 L11.7,11.3" fill="none" stroke="#3c8fbf" stroke-width="1"/><path d="M3,0 L3,11 M5.5,0 L5.5,11 M8,0 L8,11 M10.5,0 L10.5,11 M0.8,3 L11.5,3 M0.8,6 L11.5,6 M0.8,9 L11.5,9" stroke="#ddd" stroke-width="0.4"/><path d="M0.8,8.5 L3.5,5 L6,8 L8.5,6.5 L11.5,3" fill="none" stroke="#3c8fbf" stroke-width="1"/></g>
<rect x="215.2" y="8.5" width="1.3" height="1" fill="#333"/>
<path d="M221.5,7 L223,8.7 L221.5,10.4" fill="none" stroke="#777" stroke-width="0.6"/>
</svg>
<div class="t" style="left:353.5px;top:457.5px;font-size:5px;color:#6a6a6a">Motion</div>
<svg width="50" height="6" style="left:400px;top:457px">
<g fill="#c9c9c9"><circle cx="3.8" cy="3" r="1.3"/><circle cx="9.5" cy="3" r="1.3"/><circle cx="15.2" cy="3" r="1.3"/><circle cx="20.8" cy="3" r="1.3"/><circle cx="32" cy="3" r="1.3"/><circle cx="37.5" cy="3" r="1.3"/><circle cx="43.1" cy="3" r="1.3"/></g>
<circle cx="26.4" cy="3" r="1.3" fill="#3f7aa8"/>
</svg>

</body></html>
